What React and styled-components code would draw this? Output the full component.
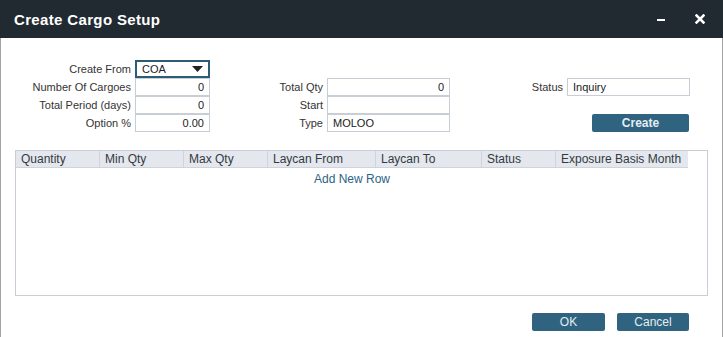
import React from "react";
import styled, { createGlobalStyle } from "styled-components";

const GlobalStyle = createGlobalStyle`
  html, body {
    margin: 0;
    padding: 0;
    background: #ffffff;
  }
  body {
    font-family: "Liberation Sans", Arial, sans-serif;
    font-size: 12px;
    color: #333;
  }
`;

const columns = [
  { title: "Quantity", width: 84 },
  { title: "Min Qty", width: 84 },
  { title: "Max Qty", width: 84 },
  { title: "Laycan From", width: 108 },
  { title: "Laycan To", width: 106 },
  { title: "Status", width: 74 },
  { title: "Exposure Basis Month", width: 132 }
];

const MinimizeIcon = () => (
  <svg width="8" height="9" viewBox="0 0 8 9">
    <rect x="0" y="4" width="8" height="2" fill="#ffffff" />
  </svg>
);

const CloseIcon = () => (
  <svg width="10" height="10" viewBox="0 0 10 10">
    <path
      d="M1.5 1.5 L8.5 8.5 M8.5 1.5 L1.5 8.5"
      stroke="#ffffff"
      strokeWidth="2.5"
      strokeLinecap="square"
    />
  </svg>
);

const Caret = () => (
  <svg width="11" height="6" viewBox="0 0 11 6">
    <path d="M0 0 L11 0 L5.5 6 Z" fill="#222" />
  </svg>
);

const App = () => {
  return (
    <>
      <GlobalStyle />
      <Window>
        <TitleBar>
          <Title>Create Cargo Setup</Title>
          <TitleActions>
            <IconButton>
              <MinimizeIcon />
            </IconButton>
            <IconButton>
              <CloseIcon />
            </IconButton>
          </TitleActions>
        </TitleBar>

        <Body>
          <Form>
            <Label col={1} row={1}>Create From</Label>
            <Select col={2} row={1}>
              <span>COA</span>
              <Caret />
            </Select>

            <Label col={1} row={2}>Number Of Cargoes</Label>
            <Input col={2} row={2} align="right">0</Input>
            <Label col={1} row={3}>Total Period (days)</Label>
            <Input col={2} row={3} align="right">0</Input>
            <Label col={1} row={4}>Option %</Label>
            <Input col={2} row={4} align="right">0.00</Input>

            <Label col={3} row={2}>Total Qty</Label>
            <Input col={4} row={2} align="right">0</Input>
            <Label col={3} row={3}>Start</Label>
            <Input col={4} row={3} />
            <Label col={3} row={4}>Type</Label>
            <Input col={4} row={4}>MOLOO</Input>

            <Label col={5} row={2}>Status</Label>
            <Input col={6} row={2}>Inquiry</Input>
            <ButtonCell col={6} row={4}>
              <Button width={97} bold>Create</Button>
            </ButtonCell>
          </Form>

          <Grid>
            <GridHeader>
              {columns.map(c => (
                <HeaderCell key={c.title} width={c.width}>
                  {c.title}
                </HeaderCell>
              ))}
            </GridHeader>
            <AddRow>Add New Row</AddRow>
          </Grid>

          <Footer>
            <Button width={73}>OK</Button>
            <Button width={72}>Cancel</Button>
          </Footer>
        </Body>
      </Window>
    </>
  );
};

const Window = styled.div`
  width: 723px;
  height: 337px;
  box-sizing: border-box;
  border-left: 1px solid #a3a3a3;
  border-right: 1px solid #a3a3a3;
  background: #ffffff;
  display: flex;
  flex-direction: column;
`;

const TitleBar = styled.div`
  height: 38px;
  flex-shrink: 0;
  background: #222a31;
  display: flex;
  align-items: center;
  justify-content: space-between;
  padding: 0 18px 0 14px;
  margin: 0 -1px;
`;

const Title = styled.h1`
  margin: 0;
  font-family: "Liberation Sans", Arial, sans-serif;
  font-size: 15px;
  font-weight: bold;
  color: #ffffff;
  letter-spacing: 0.35px;
`;

const TitleActions = styled.div`
  display: flex;
  align-items: center;
  gap: 30px;
`;

const IconButton = styled.div`
  display: flex;
  align-items: center;
  justify-content: center;
  height: 11px;
`;

const Body = styled.div`
  flex: 1;
  display: flex;
  flex-direction: column;
  padding: 22px 32px 0 14px;
`;

const Form = styled.div`
  display: grid;
  grid-template-columns: 116px 75px 109px 123px 109px 123px;
  grid-template-rows: repeat(4, 18px);
  column-gap: 4px;
`;

const Label = styled.div`
  grid-column: ${p => p.col};
  grid-row: ${p => p.row};
  display: flex;
  align-items: center;
  justify-content: flex-end;
  color: #333;
  white-space: nowrap;
  font-size: 11px;
`;

const Input = styled.div`
  grid-column: ${p => p.col};
  grid-row: ${p => p.row};
  box-sizing: border-box;
  height: 18px;
  border: 1px solid #c8ced6;
  display: flex;
  align-items: center;
  justify-content: ${p => (p.align === "right" ? "flex-end" : "flex-start")};
  padding: 0 5px;
  color: #222;
  font-size: 11px;
  background: #ffffff;
`;

const Select = styled.div`
  grid-column: ${p => p.col};
  grid-row: ${p => p.row};
  box-sizing: border-box;
  height: 18px;
  border: 2px solid #2c5d74;
  display: flex;
  align-items: center;
  justify-content: space-between;
  padding: 0 5px;
  color: #222;
  font-size: 11px;
`;

const ButtonCell = styled.div`
  grid-column: ${p => p.col};
  grid-row: ${p => p.row};
  display: flex;
  justify-content: flex-end;
  align-items: flex-end;
  padding-right: 1px;
`;

const Button = styled.div`
  box-sizing: border-box;
  width: ${p => p.width}px;
  height: 18px;
  background: #2f6380;
  border-radius: 2px;
  color: #e4edf2;
  font-size: 12px;
  font-weight: ${p => (p.bold ? "bold" : "normal")};
  display: flex;
  align-items: center;
  justify-content: center;
`;

const Grid = styled.div`
  margin-top: 18px;
  width: 693px;
  height: 146px;
  box-sizing: border-box;
  border: 1px solid #c8ced6;
  display: flex;
  flex-direction: column;
`;

const GridHeader = styled.div`
  display: flex;
  height: 17px;
  flex-shrink: 0;
`;

const HeaderCell = styled.div`
  box-sizing: border-box;
  width: ${p => p.width}px;
  background: #e4e7ee;
  border-right: 1px solid #cfd4dc;
  border-bottom: 1px solid #cfd4dc;
  color: #333a40;
  font-size: 12px;
  padding: 0 5px;
  display: flex;
  align-items: center;
  white-space: nowrap;

  &:last-child {
    border-right: none;
  }
`;

const AddRow = styled.div`
  text-align: center;
  color: #2d6384;
  font-size: 12px;
  padding-top: 4px;
  width: 672px;
`;

const Footer = styled.div`
  display: flex;
  justify-content: flex-end;
  gap: 12px;
  margin-top: 17px;
  padding-right: 1px;
`;

export default App;
